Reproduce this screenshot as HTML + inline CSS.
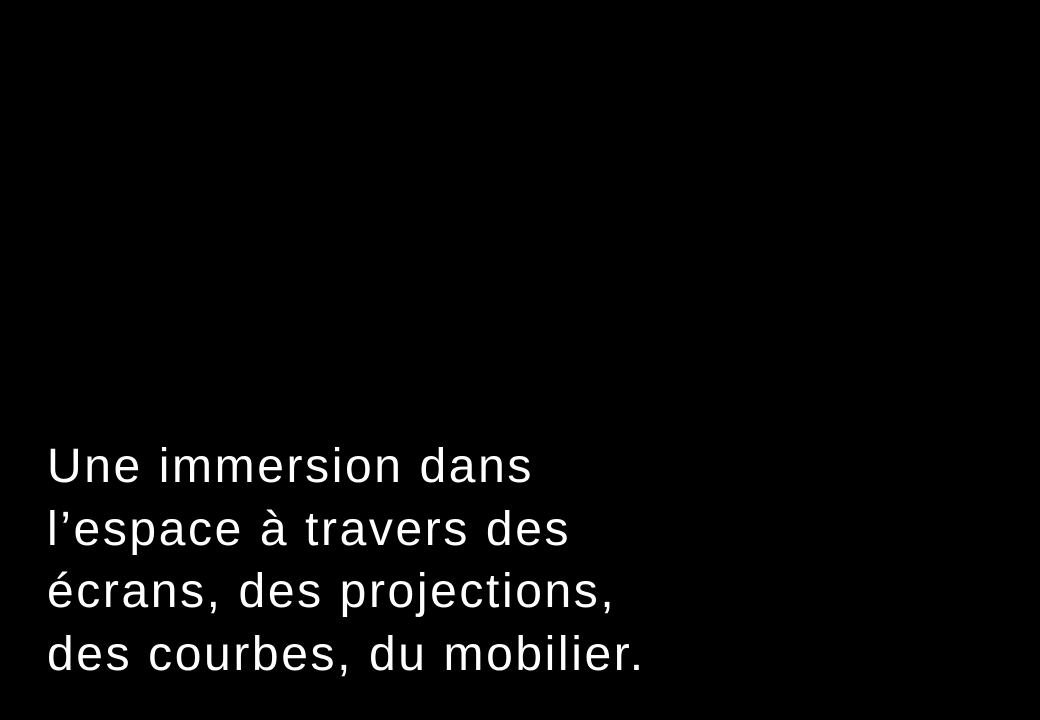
<!DOCTYPE html>
<html><head><meta charset="utf-8"><style>
html,body{margin:0;padding:0;background:#000;width:1040px;height:720px;overflow:hidden}
.t{position:absolute;left:47px;top:436px;color:#fff;font-family:"Liberation Sans",sans-serif;font-size:48px;line-height:62.5px;font-weight:normal;white-space:nowrap;letter-spacing:2.6px}
</style></head><body>
<div class="t">Une immersion dans<br>l’espace à travers des<br>écrans, des projections,<br>des courbes, du mobilier.</div>
</body></html>
